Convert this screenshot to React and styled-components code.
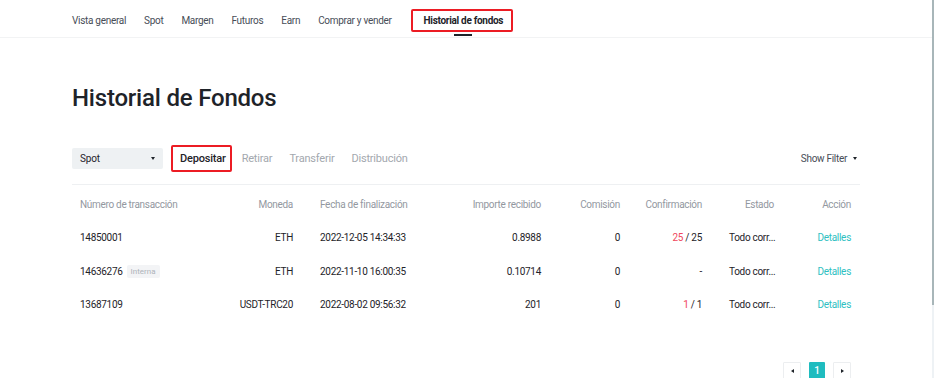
import React from "react";
import styled, { createGlobalStyle } from "styled-components";

const Global = createGlobalStyle`
  html, body { margin: 0; padding: 0; background: #fff; }
  body { font-family: Roboto, "Noto Sans", "Liberation Sans", sans-serif; color: #1e2329; }
  * { box-sizing: border-box; }
`;

const Page = styled.div`
  display: flex;
  align-items: flex-start;
  width: 934px;
  height: 378px;
  overflow: hidden;
`;

const Main = styled.div`
  flex: 1;
  min-width: 0;
`;

const Edge = styled.div`
  flex-shrink: 0;
  align-self: stretch;
  width: 2px;
  background: linear-gradient(#a8b6b9 0, #a8b6b9 305px, #eef2f5 305px);
`;

const TopNav = styled.nav`
  height: 38px;
  border-bottom: 1px solid #f2f3f4;
  display: flex;
  align-items: center;
  gap: 18px;
  padding: 4px 0 0 72px;
`;

const NavItem = styled.a`
  position: relative;
  font-size: 10px;
  letter-spacing: -0.3px;
  line-height: 13px;
  color: ${(p) => (p.$active ? "#1e2329" : "#474d57")};
  font-weight: ${(p) => (p.$active ? 700 : 400)};
  white-space: nowrap;
  ${(p) =>
    p.$active &&
    `
    margin-left: 1px;
    border: 2px solid #ec1c24;
    border-radius: 2px;
    padding: 3px 8px 3px 11px;
    &::after {
      content: "";
      position: absolute;
      left: 41px;
      bottom: -6px;
      width: 18px;
      height: 2px;
      background: #1e2329;
    }
  `}
`;

const Content = styled.div`
  padding: 0 72px;
`;

const Title = styled.h1`
  margin: 44px 0 0;
  font-size: 24px;
  letter-spacing: -0.2px;
  line-height: 32px;
  font-weight: 500;
  color: #1e2329;
`;

const Toolbar = styled.div`
  margin-top: 30px;
  height: 28px;
  display: flex;
  align-items: center;
`;

const Select = styled.div`
  width: 91px;
  height: 21px;
  background: #eef1f3;
  border-radius: 2px;
  display: flex;
  align-items: center;
  justify-content: space-between;
  padding: 0 8px;
  font-size: 10px;
  letter-spacing: -0.2px;
  color: #1e2329;
  margin-right: 8px;
`;

const Caret = styled.span`
  width: 0;
  height: 0;
  border-left: 2.5px solid transparent;
  border-right: 2.5px solid transparent;
  border-top: 3px solid #1e2329;
`;

const Tab = styled.span`
  font-size: 11px;
  letter-spacing: -0.2px;
  white-space: nowrap;
  color: ${(p) => (p.$active ? "#1e2329" : "#a3a8ae")};
  font-weight: ${(p) => (p.$active ? 500 : 400)};
  margin-right: 17px;
  ${(p) =>
    p.$active &&
    `
    border: 2px solid #ec1c24;
    border-radius: 2px;
    height: 27px;
    display: flex;
    align-items: center;
    padding: 0 4px 0 7px;
    margin-right: 10px;
  `}
`;

const Spacer = styled.div`
  flex: 1;
`;

const FilterToggle = styled.span`
  display: flex;
  align-items: center;
  gap: 6px;
  font-size: 10px;
  letter-spacing: -0.3px;
  color: #474d57;
  margin-right: 3px;
`;

const Divider = styled.div`
  height: 1px;
  background: #eef0f2;
  margin-top: 12px;
`;

const Grid = styled.div`
  display: grid;
  grid-template-columns: 120px 93px 137px 111px 79px 82px 72px 77px;
  padding: 0 9px 0 8px;
  font-size: 10px;
  letter-spacing: -0.3px;
`;

const Cell = styled.div`
  height: ${(p) => (p.$head ? "36px" : "33.5px")};
  padding-top: ${(p) => (p.$head ? "3px" : "0")};
  display: flex;
  align-items: center;
  justify-content: ${(p) => (p.$right ? "flex-end" : "flex-start")};
  padding-left: ${(p) => p.$pl || 0}px;
  color: ${(p) => (p.$head ? "#93989f" : "#1e2329")};
  white-space: nowrap;
`;

const Badge = styled.span`
  margin-left: 4px;
  font-size: 8px;
  letter-spacing: 0;
  color: #aeb3b9;
  background: #f3f4f6;
  padding: 2px 4px;
  border-radius: 2px;
`;

const Red = styled.span`
  color: #f0475d;
`;

const Link = styled.a`
  color: #2fbfc2;
`;

const Pager = styled.div`
  margin-top: 40px;
  display: flex;
  justify-content: flex-end;
  gap: 8px;
  padding-right: 9px;
`;

const PageBtn = styled.div`
  width: ${(p) => (p.$active ? 16 : 18)}px;
  height: 18px;
  display: flex;
  align-items: center;
  justify-content: center;
  font-size: 10px;
  font-weight: 500;
  color: ${(p) => (p.$active ? "#fff" : "#1e2329")};
  background: ${(p) => (p.$active ? "#1fbcbf" : "#fff")};
  border: ${(p) => (p.$active ? "none" : "1px solid #eceef0")};
  border-radius: 1px;
`;

const Arrow = styled.span`
  width: 0;
  height: 0;
  border-top: 2.5px solid transparent;
  border-bottom: 2.5px solid transparent;
  ${(p) => (p.$dir === "left" ? "border-right: 3px solid #1e2329;" : "border-left: 3px solid #1e2329;")}
`;

const navItems = ["Vista general", "Spot", "Margen", "Futuros", "Earn", "Comprar y vender"];

const cols = [
  { label: "Número de transacción" },
  { label: "Moneda", right: true },
  { label: "Fecha de finalización", pl: 27 },
  { label: "Importe recibido", right: true },
  { label: "Comisión", right: true },
  { label: "Confirmación", right: true },
  { label: "Estado", right: true, pl: 27 },
  { label: "Acción", right: true },
];

const rows = [
  { id: "14850001", coin: "ETH", date: "2022-12-05 14:34:33", amount: "0.8988", fee: "0", conf: [25, 25] },
  { id: "14636276", internal: true, coin: "ETH", date: "2022-11-10 16:00:35", amount: "0.10714", fee: "0", conf: null },
  { id: "13687109", coin: "USDT-TRC20", date: "2022-08-02 09:56:32", amount: "201", fee: "0", conf: [1, 1] },
];

export default function App() {
  return (
    <>
      <Global />
      <Page>
        <Main>
          <TopNav>
            {navItems.map((n) => (
              <NavItem key={n}>{n}</NavItem>
            ))}
            <NavItem $active>Historial de fondos</NavItem>
          </TopNav>
          <Content>
            <Title>Historial de Fondos</Title>
            <Toolbar>
              <Select>
                Spot
                <Caret />
              </Select>
              <Tab $active>Depositar</Tab>
              <Tab>Retirar</Tab>
              <Tab>Transferir</Tab>
              <Tab>Distribución</Tab>
              <Spacer />
              <FilterToggle>
                Show Filter
                <Caret />
              </FilterToggle>
            </Toolbar>
            <Divider />
            <Grid>
              {cols.map((c) => (
                <Cell key={c.label} $head $right={c.right} $pl={c.pl}>
                  {c.label}
                </Cell>
              ))}
              {rows.map((r) => (
                <React.Fragment key={r.id}>
                  <Cell>
                    {r.id}
                    {r.internal && <Badge>Interna</Badge>}
                  </Cell>
                  <Cell $right>{r.coin}</Cell>
                  <Cell $pl={27}>{r.date}</Cell>
                  <Cell $right>{r.amount}</Cell>
                  <Cell $right>{r.fee}</Cell>
                  <Cell $right>
                    {r.conf ? (
                      <span>
                        <Red>{r.conf[0]}</Red> / {r.conf[1]}
                      </span>
                    ) : (
                      "-"
                    )}
                  </Cell>
                  <Cell $pl={27}>Todo corr...</Cell>
                  <Cell $right>
                    <Link>Detalles</Link>
                  </Cell>
                </React.Fragment>
              ))}
            </Grid>
            <Pager>
              <PageBtn>
                <Arrow $dir="left" />
              </PageBtn>
              <PageBtn $active>1</PageBtn>
              <PageBtn>
                <Arrow $dir="right" />
              </PageBtn>
            </Pager>
          </Content>
        </Main>
        <Edge />
      </Page>
    </>
  );
}
